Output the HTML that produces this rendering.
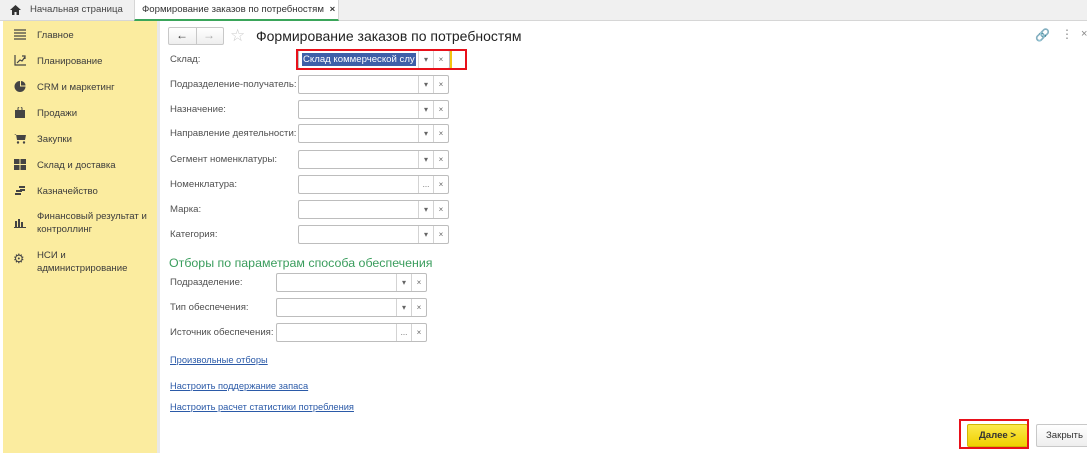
<!DOCTYPE html>
<html><head><meta charset="utf-8"><style>
*{margin:0;padding:0;box-sizing:border-box}
body{width:1087px;height:453px;overflow:hidden;background:#fff;font-family:"Liberation Sans",sans-serif;font-size:10px;color:#4a4a4a;position:relative}
.a{position:absolute}
.tabs{left:0;top:0;width:1087px;height:21px;background:#f0f0f0;border-bottom:1px solid #d6d6d6}
.side{left:3px;top:21px;width:154px;height:432px;background:#fbec9f}
.sb{left:157px;top:21px;width:3px;height:432px;background:#e8e8e8}
.it{position:absolute;left:37px;font-size:9.6px;color:#3c3c3c;line-height:13px}
.ic{position:absolute;left:14px;width:12px;height:11px}
.lb{position:absolute;left:170px;font-size:9.6px;color:#505050}
.f{position:absolute;height:19px;border:1px solid #bdbdbd;border-radius:2px;background:#fff}
.f .d,.f .x{position:absolute;top:0;height:17px;width:15px;border-left:1px solid #d3d3d3;font-size:8px;text-align:center;line-height:17px;color:#666}
.lk{position:absolute;left:170px;font-size:9.3px;color:#2b5aa8;text-decoration:underline}
</style></head><body>
<div class="a tabs"></div>
<svg class="a" style="left:10px;top:5px" width="11" height="10"><path d="M0 5L5.5 0L11 5H9V10H6.5V7H4.5V10H2V5Z" fill="#333"/></svg>
<div class="a" style="left:30px;top:4px;font-size:9.6px;color:#444">Начальная страница</div>
<div class="a" style="left:134px;top:0;width:205px;height:21px;background:#fff;border-left:1px solid #d6d6d6;border-right:1px solid #d6d6d6;border-bottom:2px solid #3aa55a"></div>
<div class="a" style="left:142px;top:4px;font-size:9.6px;color:#333">Формирование заказов по потребностям <b style="margin-left:3px">×</b></div>

<div class="a side"></div><div class="a sb"></div>
<svg class="ic" style="top:29px" viewBox="0 0 12 11"><path d="M0 1h12M0 4h12M0 7h12M0 10h12" stroke="#444" stroke-width="1.3"/></svg>
<div class="it" style="top:29px">Главное</div>
<svg class="ic" style="top:55px" viewBox="0 0 12 11"><path d="M1 0V10H12M3 8L6 5L8 6L11 2M8 1h3v3" stroke="#444" stroke-width="1.2" fill="none"/></svg>
<div class="it" style="top:55px">Планирование</div>
<svg class="ic" style="top:81px" viewBox="0 0 12 11"><path d="M6 0A5.5 5.5 0 1 0 11.5 5.5H6Z" fill="#444"/><path d="M7 0V4.5H11.5A4.5 4.5 0 0 0 7 0Z" fill="#444"/></svg>
<div class="it" style="top:81px">CRM и маркетинг</div>
<svg class="ic" style="top:107px" viewBox="0 0 12 11"><path d="M1 3H11V11H1Z" fill="#444"/><path d="M4 3V1.5A2 2 0 0 1 8 1.5V3" stroke="#444" fill="none"/></svg>
<div class="it" style="top:107px">Продажи</div>
<svg class="ic" style="top:133px" viewBox="0 0 12 11"><path d="M0 1H2L3 7H11L12 2H2.5" fill="#444"/><circle cx="4" cy="9.5" r="1.2" fill="#444"/><circle cx="10" cy="9.5" r="1.2" fill="#444"/></svg>
<div class="it" style="top:133px">Закупки</div>
<svg class="ic" style="top:159px" viewBox="0 0 12 11"><path d="M0 0h5.5v5h-5.5zM6.5 0h5.5v5h-5.5zM0 6h5.5v5h-5.5zM6.5 6h5.5v5h-5.5z" fill="#444"/></svg>
<div class="it" style="top:159px">Склад и доставка</div>
<svg class="ic" style="top:185px" viewBox="0 0 12 11"><path d="M2 5h6v2h-6zM1 8h6v2h-6zM5 1h6v2h-6zM6 4h5v2h-5z" fill="#444"/></svg>
<div class="it" style="top:185px">Казначейство</div>
<svg class="ic" style="top:217px" viewBox="0 0 12 11"><path d="M1 4h2v6h-2zM4 2h2v8h-2zM7 5h2v5h-2zM0 10h12v1h-12z" fill="#444"/></svg>
<div class="it" style="top:210px">Финансовый результат и<br>контроллинг</div>
<div class="a" style="left:13px;top:251px;font-size:13px;color:#444">&#9881;</div>
<div class="it" style="top:249px">НСИ и<br>администрирование</div>

<div class="a" style="left:168px;top:27px;width:56px;height:18px;border:1px solid #c8c8c8;border-radius:2px;background:linear-gradient(#fff,#eee)"></div>
<div class="a" style="left:196px;top:27px;width:1px;height:18px;background:#c8c8c8"></div>
<div class="a" style="left:176px;top:28px;font-size:12px;color:#333;font-weight:bold">&#8592;</div>
<div class="a" style="left:203px;top:28px;font-size:12px;color:#aaa;font-weight:bold">&#8594;</div>
<div class="a" style="left:230px;top:26px;font-size:17px;color:#ccc">&#9734;</div>
<div class="a" style="left:256px;top:28px;font-size:14px;color:#222">Формирование заказов по потребностям</div>
<div class="a" style="left:1035px;top:28px;font-size:12px;color:#999">&#128279;</div>
<div class="a" style="left:1061px;top:27px;font-size:12px;color:#888">&#8942;</div>
<div class="a" style="left:1081px;top:28px;font-size:11px;color:#888">×</div>

<div class="lb" style="top:54px">Склад:</div>
<div class="f" style="left:298px;top:50px;width:152px"><div class="a" style="left:3px;top:2px;background:#3e5fa8;color:#fff;font-size:9.6px;padding:0 1px;line-height:13px">Склад коммерческой слу</div><div class="d" style="left:119px">▾</div><div class="x" style="left:134px">×</div></div>
<div class="a" style="left:450px;top:51px;width:2px;height:17px;background:#f1c40f"></div>
<div class="a" style="left:296px;top:49px;width:171px;height:21px;border:2px solid #e8101a"></div>

<div class="lb" style="top:79px">Подразделение-получатель:</div>
<div class="f" style="left:298px;top:75px;width:151px"><div class="d" style="left:119px">▾</div><div class="x" style="left:134px">×</div></div>
<div class="lb" style="top:104px">Назначение:</div>
<div class="f" style="left:298px;top:100px;width:151px"><div class="d" style="left:119px">▾</div><div class="x" style="left:134px">×</div></div>
<div class="lb" style="top:128px">Направление деятельности:</div>
<div class="f" style="left:298px;top:124px;width:151px"><div class="d" style="left:119px">▾</div><div class="x" style="left:134px">×</div></div>
<div class="lb" style="top:154px">Сегмент номенклатуры:</div>
<div class="f" style="left:298px;top:150px;width:151px"><div class="d" style="left:119px">▾</div><div class="x" style="left:134px">×</div></div>
<div class="lb" style="top:179px">Номенклатура:</div>
<div class="f" style="left:298px;top:175px;width:151px"><div class="d" style="left:119px">...</div><div class="x" style="left:134px">×</div></div>
<div class="lb" style="top:204px">Марка:</div>
<div class="f" style="left:298px;top:200px;width:151px"><div class="d" style="left:119px">▾</div><div class="x" style="left:134px">×</div></div>
<div class="lb" style="top:229px">Категория:</div>
<div class="f" style="left:298px;top:225px;width:151px"><div class="d" style="left:119px">▾</div><div class="x" style="left:134px">×</div></div>

<div class="a" style="left:169px;top:256px;font-size:12.4px;color:#3a9d5d">Отборы по параметрам способа обеспечения</div>
<div class="lb" style="top:277px">Подразделение:</div>
<div class="f" style="left:276px;top:273px;width:151px"><div class="d" style="left:119px">▾</div><div class="x" style="left:134px">×</div></div>
<div class="lb" style="top:302px">Тип обеспечения:</div>
<div class="f" style="left:276px;top:298px;width:151px"><div class="d" style="left:119px">▾</div><div class="x" style="left:134px">×</div></div>
<div class="lb" style="top:327px">Источник обеспечения:</div>
<div class="f" style="left:276px;top:323px;width:151px"><div class="d" style="left:119px">...</div><div class="x" style="left:134px">×</div></div>

<div class="lk" style="top:355px">Произвольные отборы</div>
<div class="lk" style="top:381px">Настроить поддержание запаса</div>
<div class="lk" style="top:402px">Настроить расчет статистики потребления</div>

<div class="a" style="left:967px;top:424px;width:61px;height:23px;background:linear-gradient(#fbe94a,#f0d000);border:1px solid #d2b600;border-radius:2px;font-size:9.6px;font-weight:bold;color:#333;text-align:center;line-height:21px">Далее &gt;</div>
<div class="a" style="left:959px;top:419px;width:70px;height:30px;border:2px solid #e8101a"></div>
<div class="a" style="left:1036px;top:424px;width:60px;height:23px;background:linear-gradient(#fff,#eee);border:1px solid #c8c8c8;border-radius:2px;font-size:9.6px;color:#333;line-height:21px;padding-left:9px">Закрыть</div>
</body></html>
